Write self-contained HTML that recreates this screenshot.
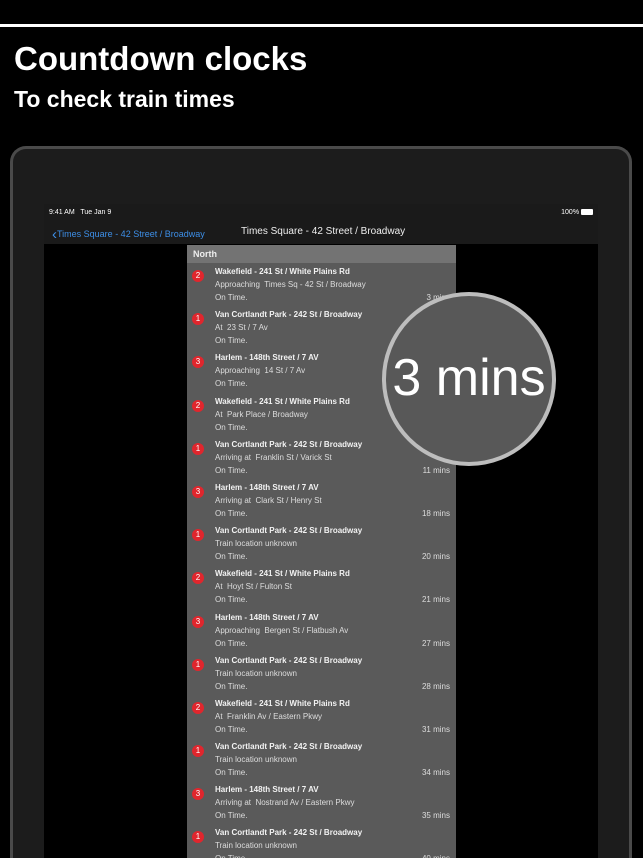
<!DOCTYPE html>
<html><head><style>
*{margin:0;padding:0;box-sizing:border-box}
html,body{width:643px;height:858px;overflow:hidden}
body{background:#000;position:relative;font-family:"Liberation Sans",sans-serif;color:#fff}
.line{position:absolute;left:0;top:24px;width:643px;height:3px;background:#fff}
h1{position:absolute;left:14px;top:40px;font-size:33px;font-weight:bold}
h2{position:absolute;left:14px;top:86px;font-size:23px;font-weight:bold}
.frame{position:absolute;left:10px;top:146px;width:622px;height:712px;border:3px solid #4a4a4a;border-bottom:none;border-radius:16px 16px 0 0;background:#1c1c1c}
.screen{position:absolute;left:44px;top:204px;width:554px;height:654px;background:#000;overflow:hidden}
.status{position:absolute;left:0;top:0;width:554px;height:40px;background:#1a1a1a;font-size:7px}
.nav{position:absolute;top:22px;font-size:10px}
.panel{position:absolute;left:143px;top:41px;width:269px;height:620px;background:#5a5a5a;overflow:hidden}
.hdr{height:18px;background:#737373;font-size:9px;font-weight:bold;padding:4px 0 0 6px;color:#eee}
.row{position:relative;height:43.2px;font-size:8px;color:#ddd}
.row b{position:absolute;left:28px;top:4px;color:#f2f2f2}
.row .s{position:absolute;left:28px;top:17px}
.row .o{position:absolute;left:28px;top:30px}
.row .m{position:absolute;right:6px;top:30px}
.bd{position:absolute;left:5px;top:7px;width:12px;height:12px;border-radius:50%;background:#e0262d;color:#fff;font-size:8px;text-align:center;line-height:12px}
.mag{position:absolute;left:382px;top:292px;width:174px;height:174px;border-radius:50%;border:4px solid #bdbdbd;background:#585858;text-align:center;line-height:164px;font-size:52px;color:#fff}
</style></head><body>
<div class="line"></div>
<h1>Countdown clocks</h1>
<h2>To check train times</h2>
<div class="frame"></div>
<div class="screen">
<div class="status"><span style="position:absolute;left:5px;top:5px">9:41 AM&nbsp;&nbsp; Tue Jan 9</span><span style="position:absolute;right:5px;top:5px">100% <span style="display:inline-block;width:12px;height:6px;background:#fff;border-radius:1px;vertical-align:middle"></span></span>
<span class="nav" style="left:8px;top:20px;font-size:9px;color:#3d8ee6"><span style="font-size:15px;position:relative;top:2px">‹</span>Times Square - 42 Street / Broadway</span>
<span class="nav" style="left:197px;color:#eee">Times Square - 42 Street / Broadway</span></div>
<div class="panel"><div class="hdr">North</div>
<div class="row"><span class="bd">2</span><b>Wakefield - 241 St / White Plains Rd</b><span class="s">Approaching&nbsp; Times Sq - 42 St / Broadway</span><span class="o">On Time.</span><span class="m">3 mins</span></div>
<div class="row"><span class="bd">1</span><b>Van Cortlandt Park - 242 St / Broadway</b><span class="s">At&nbsp; 23 St / 7 Av</span><span class="o">On Time.</span></div>
<div class="row"><span class="bd">3</span><b>Harlem - 148th Street / 7 AV</b><span class="s">Approaching&nbsp; 14 St / 7 Av</span><span class="o">On Time.</span></div>
<div class="row"><span class="bd">2</span><b>Wakefield - 241 St / White Plains Rd</b><span class="s">At&nbsp; Park Place / Broadway</span><span class="o">On Time.</span></div>
<div class="row"><span class="bd">1</span><b>Van Cortlandt Park - 242 St / Broadway</b><span class="s">Arriving at&nbsp; Franklin St / Varick St</span><span class="o">On Time.</span><span class="m">11 mins</span></div>
<div class="row"><span class="bd">3</span><b>Harlem - 148th Street / 7 AV</b><span class="s">Arriving at&nbsp; Clark St / Henry St</span><span class="o">On Time.</span><span class="m">18 mins</span></div>
<div class="row"><span class="bd">1</span><b>Van Cortlandt Park - 242 St / Broadway</b><span class="s">Train location unknown</span><span class="o">On Time.</span><span class="m">20 mins</span></div>
<div class="row"><span class="bd">2</span><b>Wakefield - 241 St / White Plains Rd</b><span class="s">At&nbsp; Hoyt St / Fulton St</span><span class="o">On Time.</span><span class="m">21 mins</span></div>
<div class="row"><span class="bd">3</span><b>Harlem - 148th Street / 7 AV</b><span class="s">Approaching&nbsp; Bergen St / Flatbush Av</span><span class="o">On Time.</span><span class="m">27 mins</span></div>
<div class="row"><span class="bd">1</span><b>Van Cortlandt Park - 242 St / Broadway</b><span class="s">Train location unknown</span><span class="o">On Time.</span><span class="m">28 mins</span></div>
<div class="row"><span class="bd">2</span><b>Wakefield - 241 St / White Plains Rd</b><span class="s">At&nbsp; Franklin Av / Eastern Pkwy</span><span class="o">On Time.</span><span class="m">31 mins</span></div>
<div class="row"><span class="bd">1</span><b>Van Cortlandt Park - 242 St / Broadway</b><span class="s">Train location unknown</span><span class="o">On Time.</span><span class="m">34 mins</span></div>
<div class="row"><span class="bd">3</span><b>Harlem - 148th Street / 7 AV</b><span class="s">Arriving at&nbsp; Nostrand Av / Eastern Pkwy</span><span class="o">On Time.</span><span class="m">35 mins</span></div>
<div class="row"><span class="bd">1</span><b>Van Cortlandt Park - 242 St / Broadway</b><span class="s">Train location unknown</span><span class="o">On Time.</span><span class="m">40 mins</span></div>
</div>
</div>
<div class="mag">3 mins</div>
</body></html>
